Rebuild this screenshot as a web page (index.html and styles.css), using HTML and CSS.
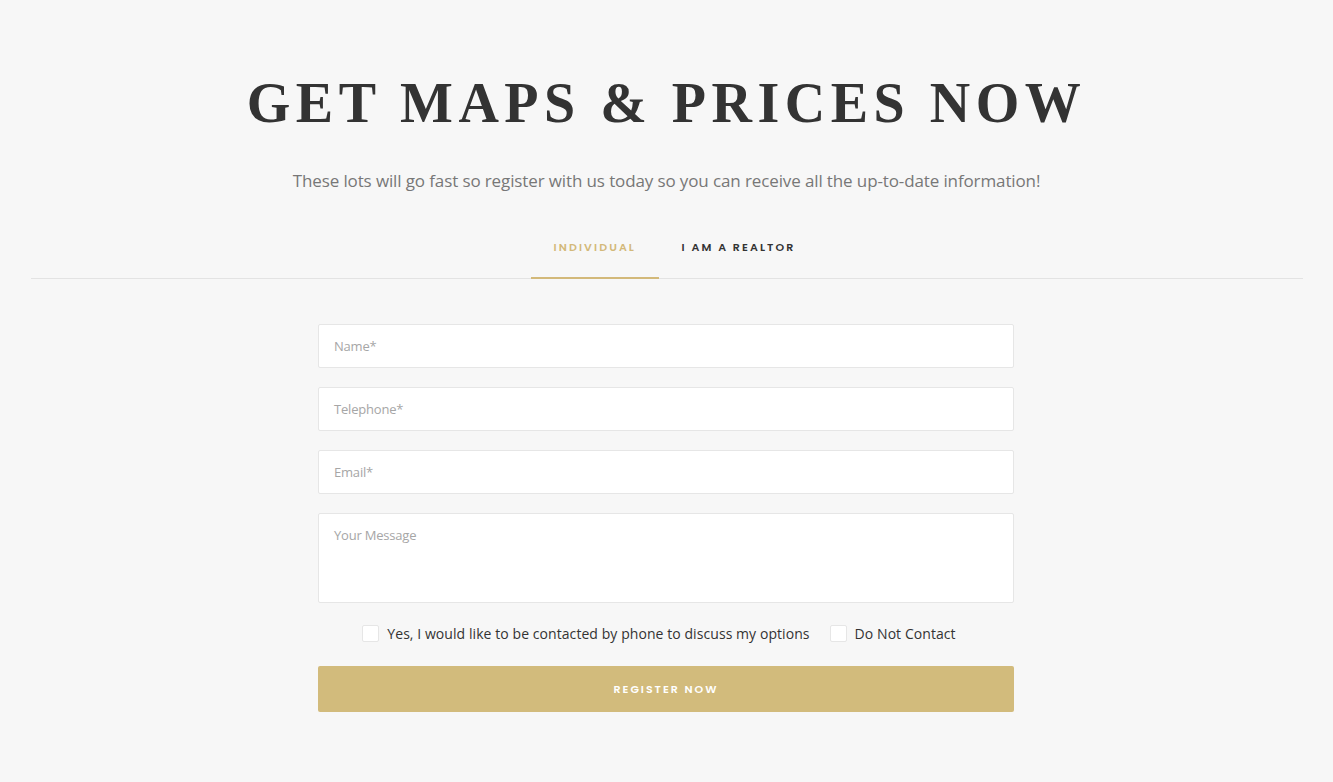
FILE: index.html
```html
<!DOCTYPE html>
<html>
<head>
<meta charset="utf-8">
<link rel="stylesheet" href="styles.css">
</head>
<body>
<section class="register">
  <h1 class="title">GET MAPS &amp; PRICES NOW</h1>
  <p class="lead">These lots will go fast so register with us today so you can receive all the up-to-date information!</p>
  <div class="tabs">
    <div class="tab active">INDIVIDUAL</div>
    <div class="tab">I AM A REALTOR</div>
  </div>
  <form class="form">
    <div class="field">Name*</div>
    <div class="field">Telephone*</div>
    <div class="field">Email*</div>
    <div class="field area">Your Message</div>
    <div class="checks">
      <label class="check"><span class="box"></span>Yes, I would like to be contacted by phone to discuss my options</label>
      <label class="check"><span class="box"></span>Do Not Contact</label>
    </div>
    <div class="button">REGISTER NOW</div>
  </form>
</section>
</body>
</html>
```
FILE: styles.css
```css
html, body { margin: 0; padding: 0; }
body {
  background: #f7f7f7;
  font-family: "Open Sans", "Liberation Sans", sans-serif;
  width: 1333px;
  height: 782px;
  overflow: hidden;
}
.register {
  display: flex;
  flex-direction: column;
  align-items: center;
  padding-top: 70px;
}
.title {
  margin: 0;
  font-family: "Liberation Serif", serif;
  font-weight: 700;
  font-size: 56px;
  line-height: 66px;
  letter-spacing: 5.5px;
  color: #333333;
}
.lead {
  margin: 33px 0 0;
  font-family: "Open Sans", sans-serif;
  font-size: 17px;
  color: #777777;
  letter-spacing: -0.12px;
}
.tabs {
  align-self: stretch;
  margin: 35px 30px 0 31px;
  display: flex;
  justify-content: center;
  border-bottom: 1px solid #e3e3e3;
  padding-left: 15px;
}
.tab {
  padding: 12px 23px 21px;
  font-family: "Poppins", "Inter", sans-serif;
  font-weight: 600;
  font-size: 11px;
  letter-spacing: 2.1px;
  color: #333;
  margin-bottom: -1px;
}
.tab.active {
  color: #d3b97a;
  border-bottom: 2px solid #d3b97a;
  width: 82px;
  text-align: center;
}
.form {
  width: 696px;
  margin: 45px 1px 0 0;
  display: flex;
  flex-direction: column;
  gap: 19px;
}
.field {
  height: 44px;
  box-sizing: border-box;
  background: #fff;
  border: 1px solid #e6e6e6;
  border-radius: 2px;
  padding: 12px 15px;
  font-size: 13px;
  color: #a6a6a6;
  letter-spacing: -0.2px;
}
.field.area { height: 90px; }
.checks {
  display: flex;
  justify-content: center;
  gap: 20px;
  margin-top: 2px;
  padding-right: 14px;
}
.check {
  display: flex;
  align-items: center;
  font-size: 14px;
  color: #333;
  letter-spacing: 0.07px;
}
.box {
  width: 17px;
  height: 17px;
  box-sizing: border-box;
  background: #fff;
  border: 1px solid #e6e6e6;
  border-radius: 2px;
  margin-right: 8px;
}
.button {
  height: 46px;
  margin-top: 4px;
  background: #d2bb7c;
  border-radius: 2px;
  display: flex;
  align-items: center;
  justify-content: center;
  font-family: "Poppins", "Inter", sans-serif;
  font-weight: 600;
  font-size: 11px;
  letter-spacing: 2px;
  color: #fff;
}
```
